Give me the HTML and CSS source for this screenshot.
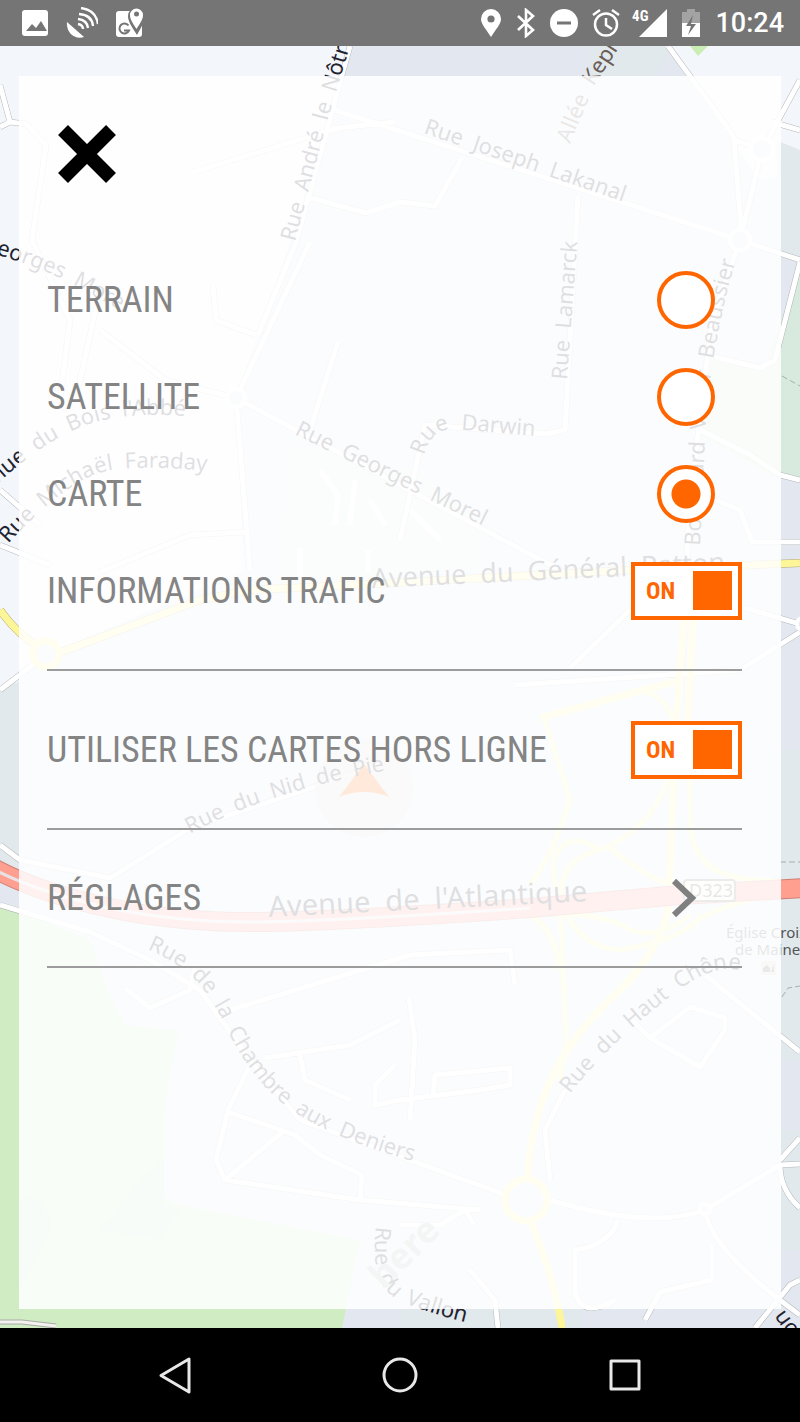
FILE: index.html
```html
<!DOCTYPE html>
<html lang="fr">
<head>
<meta charset="utf-8">
<meta name="viewport" content="width=device-width, initial-scale=1">
<title>Options de la carte</title>
<link rel="stylesheet" href="styles.css">
</head>
<body>
<header class="status">
  <div class="status-group status-left">
    <svg class="status-icon" viewBox="0 0 32 32" aria-hidden="true"><rect x="3" y="3" width="26" height="26" rx="3" fill="#fff"/><path d="M7 24l6-7 4 4 5-7 6 10z" fill="#757575"/></svg>
    <svg class="status-icon" viewBox="0 0 32 32" aria-hidden="true"><path d="M1 15C0 25 8 33 18 30Z" fill="#fff"/><g fill="none" stroke="#fff" stroke-width="2.4"><path d="M12 17q5 1 5 5M12 12q9 1 10 9M13 7q13 1 14 12M15 1q15 2 17 16"/></g></svg>
    <svg class="status-icon" viewBox="0 0 32 32" aria-hidden="true"><rect x="3" y="4" width="26" height="26" rx="3" fill="#fff"/><path d="M24 28C18 19 15 14 15 9a8 8 0 0 1 17 0c0 5-3 10-8 19z" fill="#757575"/><path d="M23.500 22C19 15 17 12 17 8a6.500 6.500 0 0 1 13 0c0 4-2 7-6.500 14z" fill="#fff"/><circle cx="23.500" cy="7" r="2.500" fill="#757575"/><path d="M15.500 18.500a5 5 0 1 0 .5 5h-5" fill="none" stroke="#757575" stroke-width="2"/></svg>
  </div>
  <div class="status-group status-right">
    <svg class="status-icon pin" viewBox="0 0 20 30" aria-hidden="true"><path d="M10 29C5 21 0 16 0 11a10 10 0 0 1 20 0c0 5-5 10-10 18z" fill="#fff"/><circle cx="10" cy="11" r="3.600" fill="#757575"/></svg>
    <svg class="status-icon bt" viewBox="0 0 20 30" aria-hidden="true"><path d="M2 8l15 14-7 6V2l7 6L2 22" fill="none" stroke="#fff" stroke-width="2.600"/></svg>
    <svg class="status-icon dnd" viewBox="0 0 28 30" aria-hidden="true"><circle cx="14" cy="15" r="14" fill="#fff"/><path d="M7 15h14" stroke="#757575" stroke-width="3"/></svg>
    <svg class="status-icon alarm" viewBox="0 0 28 30" aria-hidden="true"><g fill="none" stroke="#fff" stroke-width="2.500"><circle cx="14" cy="16.500" r="11"/><path d="M14 10v7l6 4M1 7l7-5M27 7l-7-5"/></g></svg>
    <span class="network">4G</span>
    <svg class="status-icon signal" viewBox="0 0 28 30" aria-hidden="true"><path d="M0 29L28 1v28z" fill="#fff"/></svg>
    <svg class="status-icon battery" viewBox="0 0 20 30" aria-hidden="true"><path d="M6 1h8v3h5v11H1V4h5z" fill="#a3a3a3"/><path d="M1 15h18v14H1z" fill="#fff"/><path d="M12 7L5 18h5L7 27l8-11h-5z" fill="#757575"/></svg>
    <time class="clock">10:24</time>
  </div>
</header>

<main class="stage">
  <svg class="map" viewBox="0 46 800 1282" preserveAspectRatio="xMidYMid slice" aria-hidden="true">
    <defs>
      <path id="s-notre" d="M295 242L328 118 358 20 372 -20"/>
      <path id="s-kepler" d="M570 144L594 86 650 0"/>
      <path id="s-lakanal" d="M423 133L650 211"/>
      <path id="s-morel-w" d="M-20 250Q40 266 76 286T160 332"/>
      <path id="s-lamarck" d="M567 380L579 220"/>
      <path id="s-darwin" d="M424 456Q430 430 452 429L550 437"/>
      <path id="s-beaussier" d="M700 546L706 420Q712 340 738 252L746 220"/>
      <path id="s-abbe" d="M-30 510Q46 432 104 420T230 424"/>
      <path id="s-faraday" d="M8 544Q70 476 112 470T230 474"/>
      <path id="s-morel" d="M294 434L500 534"/>
      <path id="s-patton" d="M372 588L760 570"/>
      <path id="s-nid" d="M190 834Q270 790 400 768"/>
      <path id="s-atlantique" d="M269 917L630 899"/>
      <path id="s-chambre" d="M147 949C230 984 210 1030 270 1092Q310 1134 430 1166"/>
      <path id="s-chene" d="M570 1094Q610 1042 676 992T770 1000"/>
      <path id="s-vallon" d="M376 1226Q370 1276 390 1294T520 1334"/>
      <path id="roads" d="M0 85L10 122 0 127M10 122L26 124 46 145 32 240 70 320 60 400M100 330L165 380 236 398 250 570M310 242L236 398M190 173L338 128 395 122M350 46L296 242 258 335M322 106L740 240 800 260M308 197L366 213 400 202 435 206 462 158M668 46L728 128 735 140 762 150 800 80M762 150L740 240 712 320 690 500 680 700M734 140L742 240M772 122L800 130M578 196L565 430 545 434 425 425 400 540M236 398L560 570M100 290L78 390M213 286L216 320 256 335M338 342L310 430M0 545L50 565M0 490L40 525M46 655L0 690M100 572L190 535 245 532M800 262L775 360 760 368 715 357M700 430L750 455 780 475 800 480M716 500L740 510 752 542H800M745 608L800 624M800 632L740 670 515 685M630 610L570 668M0 845L20 860 110 878 190 828 380 765M0 905L90 932 150 960 200 990 250 1060 300 1120 415 1162 520 1200M125 988L150 1008 190 990 195 965M230 1010L410 955 510 950 515 985M265 1058L350 1045 400 1020M300 1055L305 1080 350 1100M250 1065L228 1110 216 1160 225 1180 360 1200 480 1210M228 1112L295 1135 320 1155 362 1175 360 1200M225 1180L285 1130M409 998L415 1040 410 1120M400 1100L375 1105V1085L395 1065M400 1100L480 1090 510 1085V1068L435 1075 433 1095M550 1200Q650 1230 705 1210L780 1165 800 1164M705 1210Q710 1250 800 1315M780 1165Q780 1190 800 1208M780 1160L800 1138M705 975L800 1052M632 1020L650 1038 700 1067 725 1030V1018L690 1007 650 1038M565 1090L545 1130 550 1180M618 1220Q610 1245 575 1250V1290Q580 1320 615 1300M712 1245V1280L660 1292 645 1320M470 1270L495 1300 498 1328M755 1328L790 1285 800 1280M400 1225L440 1225 465 1210 474 1225"/>
    </defs>

    <rect y="46" width="800" height="1282" fill="#e3e8f0"/>
    <path d="M0 46H350L290 242 236 398 244 570 46 655 0 700Z" fill="#f3f7fb"/>
    <path d="M590 46H670L560 330 590 200ZM0 690L46 670 120 850 0 870Z" fill="#e1e9ec"/>
    <path d="M665 46H800V170L760 180Z" fill="#f3f7fb"/>
    <path d="M776 140L800 150V260H780ZM780 750H800V1000H780ZM770 1000H800V1060H770ZM770 1130H800V1250H770ZM400 1300H580V1328H400Z" fill="#e1e9ec"/>
    <path d="M690 46h18l-10 10z" fill="#caedb5"/>
    <path d="M800 265V480L770 475 700 435 712 355 765 366Z" fill="#d8eadd"/>
    <path d="M290 445L420 470 482 530V568L280 585Z" fill="#e3ede7"/>
    <path d="M0 905L90 940 105 985 125 1025 178 1030 164 1110V1198L180 1205 360 1240 342 1328H0Z" fill="#d0ecc2"/>
    <path d="M20 1195Q50 1200 50 1230L20 1290ZM100 1230Q140 1180 164 1160V1205L180 1210 160 1240Z" fill="#c8e9cf"/>

    <use class="road-edge" href="#roads"/>
    <use class="road-fill" href="#roads"/>
    <path class="road-fill" d="M320 470L338 495 335 525M355 480L350 525M370 500L385 525M410 510L440 540M300 548V580M368 550V572"/>
    <g class="roundabout">
      <circle cx="236" cy="398" r="9"/><circle cx="762" cy="149" r="11"/><circle cx="740" cy="240" r="10"/><circle cx="705" cy="1209" r="5"/><circle cx="803" cy="624" r="6"/>
    </g>
    <path d="M0 1322h22l34 4" fill="none" stroke="#aaa" stroke-width="5"/><path d="M0 1322h22l34 4" fill="none" stroke="#f4f2ee" stroke-width="3"/>
    <path d="M780 862h20M782 997l6-9 12-2M782 376l18 10" fill="none" stroke="#a5b3ac" stroke-dasharray="6 3"/>

    <g class="route-edge"><path d="M0 610Q18 635 38 646M56 654L200 600 250 590 372 584 630 570 800 563"/></g>
    <g class="route-fill">
      <path d="M0 610Q18 635 38 646M56 654L200 600 250 590 372 584 630 570 800 563"/>
      <path d="M684 620L676 720 668 910Q660 950 620 990 530 1070 528 1180M693 620L688 720M540 718L680 680M530 1220Q555 1280 562 1328"/>
      <circle cx="46" cy="654" r="13"/><circle cx="526" cy="1200" r="21"/>
    </g>
    <path class="ramp" d="M688 720L691 830Q694 870 740 878L800 884M645 692Q675 700 676 740M545 720L570 800Q555 850 530 885M668 780Q650 830 600 850 560 858 560 900L566 1040 560 1080M600 850Q570 830 555 855 550 875 562 905 580 948 620 950 680 940 700 918 740 898 800 890M610 848Q650 880 670 884M420 920L530 915Q600 910 630 930 660 940 690 915M530 915Q555 930 560 970"/>
    <path d="M-5 869Q40 893 110 908T260 922 530 908L680 895 805 888" fill="none" stroke="#cf7f73" stroke-width="20"/>
    <path d="M-5 869Q40 893 110 908T260 922 530 908L680 895 805 888" fill="none" stroke="#ff9f90" stroke-width="18"/>
    <path d="M-5 870Q40 893 110 908T260 922 530 908" fill="none" stroke="#e8e2e4" stroke-width="3"/>

    <circle cx="364" cy="788" r="49" fill="#d0d0d0" fill-opacity=".6"/>
    <path d="M364 764l25 33q-25-10-50 0z" fill="#ff6600"/>

    <g class="street">
      <text><textPath href="#s-notre">Rue&#160; André&#160; le&#160; Nôtre</textPath></text>
      <text class="path-name"><textPath href="#s-kepler">Allée&#160; Kepler</textPath></text>
      <text><textPath href="#s-lakanal">Rue&#160; Joseph&#160; Lakanal</textPath></text>
      <text><textPath href="#s-morel-w">Georges&#160; Morel</textPath></text>
      <text><textPath href="#s-lamarck">Rue&#160; Lamarck</textPath></text>
      <text><textPath href="#s-darwin">Rue&#160; Darwin</textPath></text>
      <text><textPath href="#s-beaussier">Boulevard&#160; Victor&#160; Beaussier</textPath></text>
      <text><textPath href="#s-abbe">Avenue&#160; du&#160; Bois&#160; l'Abbé</textPath></text>
      <text><textPath href="#s-faraday">Rue&#160; Michaël&#160; Faraday</textPath></text>
      <text><textPath href="#s-morel">Rue&#160; Georges&#160; Morel</textPath></text>
      <text><textPath href="#s-nid">Rue&#160; du&#160; Nid&#160; de&#160; Pie</textPath></text>
      <text><textPath href="#s-chambre">Rue&#160; de&#160; la&#160; Chambre&#160; aux&#160; Deniers</textPath></text>
      <text><textPath href="#s-chene">Rue&#160; du&#160; Haut&#160; Chêne</textPath></text>
      <text><textPath href="#s-vallon">Rue&#160; du&#160; Vallon</textPath></text>
      <text transform="translate(774 1316) rotate(54)">uo</text>
      <text class="avenue"><textPath href="#s-patton">Avenue&#160; du&#160; Général&#160; Patton</textPath></text>
      <text class="avenue-main"><textPath href="#s-atlantique">Avenue&#160; de&#160; l'Atlantique</textPath></text>
    </g>
    <rect x="684" y="880" width="51" height="21" rx="3" fill="#f6f3ee" stroke="#777" stroke-width="2"/>
    <text class="shield" x="689" y="897">D323</text>
    <text class="place" x="726" y="938">Église Croix</text>
    <text class="place" x="735" y="955">de Maine</text>
    <rect x="761" y="961" width="15" height="14" fill="#d9d6cc"/><path d="M763 972v-4l4-3 3 3v4zM771 972l3-8v8z" fill="#666"/>
    <text class="logo" transform="translate(384 1290) rotate(-45)">here</text>
  </svg>

  <section class="panel">
    <button class="close" type="button" aria-label="Fermer">
      <svg viewBox="0 0 58 58" aria-hidden="true"><path d="M5 5l48 48M53 5L5 53" stroke="#000" stroke-width="14"/></svg>
    </button>
    <form class="options">
      <label class="row"><span>TERRAIN</span><input class="radio" type="radio" name="fond"></label>
      <label class="row"><span>SATELLITE</span><input class="radio" type="radio" name="fond"></label>
      <label class="row"><span>CARTE</span><input class="radio" type="radio" name="fond" checked></label>
      <div class="block traffic">
        <label class="row"><span>INFORMATIONS TRAFIC</span><span class="switch"><input type="checkbox" role="switch" checked><span class="state">ON</span><span class="thumb"></span></span></label>
      </div>
      <div class="block offline">
        <label class="row"><span>UTILISER LES CARTES HORS LIGNE</span><span class="switch"><input type="checkbox" role="switch" checked><span class="state">ON</span><span class="thumb"></span></span></label>
      </div>
      <a class="block row settings" href="#reglages"><span>RÉGLAGES</span><svg class="chevron" viewBox="0 0 26 40" aria-hidden="true"><path d="M3 3l18 17L3 37" fill="none" stroke="#808080" stroke-width="6"/></svg></a>
    </form>
  </section>
</main>

<nav class="navbar" aria-label="Navigation">
  <button type="button" aria-label="Retour"><svg viewBox="0 0 40 40" aria-hidden="true"><path d="M34 4v33L6 20.500z"/></svg></button>
  <button type="button" aria-label="Accueil"><svg viewBox="0 0 40 40" aria-hidden="true"><circle cx="20" cy="20" r="16"/></svg></button>
  <button type="button" aria-label="Applications récentes"><svg viewBox="0 0 40 40" aria-hidden="true"><rect x="6" y="6" width="28" height="28"/></svg></button>
</nav>
</body>
</html>
```

FILE: styles.css
```css
* { box-sizing: border-box; }

body {
  margin: 0;
  min-height: 100vh;
  display: flex;
  flex-direction: column;
  background: #000;
  font-family: "Roboto Condensed", "Open Sans Condensed", Roboto, sans-serif;
  color: #808080;
}

button {
  padding: 0;
  border: 0;
  background: none;
}

/* Status bar */
.status {
  height: 46px;
  padding: 0 16px 0 19px;
  display: flex;
  justify-content: space-between;
  align-items: center;
  background: #757575;
  color: #fff;
}
.status-group { display: flex; align-items: center; }
.status-left { gap: 15px; }
.status-icon { width: 32px; height: 32px; display: block; }
.status-right .status-icon { width: 28px; height: 30px; }
.status-right .pin { width: 20px; margin-right: 15px; }
.status-right .bt { width: 20px; margin-right: 14px; }
.status-right .dnd { margin-right: 14px; }
.status-right .alarm { margin-right: 12px; }
.network {
  align-self: flex-start;
  margin-right: -9px;
  font: 700 15px/18px "Roboto Condensed", Roboto, sans-serif;
}
.status-right .battery { width: 20px; margin: 0 14px; }
.clock { font: 500 27px/32px Roboto, sans-serif; }

/* Map */
.stage {
  position: relative;
  flex: 1;
  display: flex;
  padding: 30px 19px 19px;
  background: #e3e8f0;
}
.map {
  position: absolute;
  inset: 0;
  width: 100%;
  height: 100%;
}
.road-edge, .road-fill, .route-edge, .route-fill, .ramp { fill: none; stroke-linejoin: round; }
.road-edge { stroke: #b4b7ba; stroke-width: 6; }
.road-fill { stroke: #fff; stroke-width: 5; }
.roundabout { fill: #e3e8f0; stroke: #fff; stroke-width: 4; }
.route-edge { stroke: #b5a878; stroke-width: 8; }
.route-fill { stroke: #fdf698; stroke-width: 7; }
.route-fill circle { fill: #e3e8f0; }
.ramp { stroke: #fbf6a6; stroke-width: 5; }
.street {
  fill: #222230;
  font: 22px "Noto Sans", sans-serif;
}
.path-name { fill: #6a5c57; }
.avenue { font-size: 27px; }
.avenue-main { font-size: 29px; }
.shield { fill: #555; font: 18px "Noto Sans", sans-serif; }
.place { fill: #555; font: 15px "Noto Sans", sans-serif; }
.logo { fill: #a9bdb9; font: 700 36px "Noto Sans", sans-serif; }

/* Options panel */
.panel {
  position: relative;
  flex: 1;
  padding: 49px 39px 0 28px;
  background: rgba(255, 255, 255, .86);
}
.close {
  display: block;
  width: 58px;
  height: 58px;
  margin: 0 0 68px 11px;
}
.close svg { display: block; }
.row {
  display: flex;
  align-items: center;
  justify-content: space-between;
  height: 97px;
  font-size: 36px;
  font-weight: 400;
  line-height: 40px;
  color: #848484;
  text-decoration: none;
  white-space: nowrap;
}
.radio {
  appearance: none;
  width: 58px;
  height: 58px;
  margin: 0 27px 0 0;
  border: 4px solid #f60;
  border-radius: 50%;
  background: #fff;
}
.radio:checked { background: radial-gradient(circle, #f60 14px, #fff 15px); }
.block { border-bottom: 2px solid #9c9c9c; }
.traffic { padding-bottom: 30px; }
.offline .row { height: 157px; }
.settings { height: 138px; padding-right: 45px; }
.chevron { width: 26px; height: 40px; }

.switch {
  position: relative;
  display: flex;
  flex: none;
  align-items: center;
  justify-content: space-between;
  width: 111px;
  height: 58px;
  padding: 0 6px 0 11px;
  border: 4px solid #f60;
  background: #fff;
}
.switch input {
  appearance: none;
  position: absolute;
  inset: 0;
  margin: 0;
}
.state { font-size: 24px; font-weight: 700; color: #f60; }
.thumb { width: 39px; height: 39px; background: #f60; }

/* Navigation bar */
.navbar {
  display: flex;
  justify-content: center;
  align-items: center;
  gap: 185px;
  height: 94px;
  background: #000;
}
.navbar button, .navbar svg { display: block; width: 40px; height: 40px; }
.navbar svg { fill: none; stroke: #e8e8e8; stroke-width: 3; stroke-linejoin: round; }
```
